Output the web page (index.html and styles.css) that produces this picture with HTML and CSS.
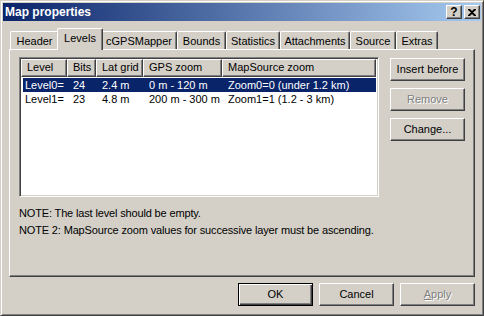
FILE: index.html
```html
<!DOCTYPE html>
<html>
<head>
<meta charset="utf-8">
<link rel="stylesheet" href="styles.css">
</head>
<body>
<div class="window">
  <div class="titlebar">
    <span class="title">Map properties</span>
    <div class="capbtns">
      <span class="capbtn">?</span>
      <span class="capbtn close">
        <svg width="8" height="7" viewBox="0 0 8 7"><path d="M0 0h2l2 2 2-2h2v1L5 3.5 8 6v1H6L4 5 2 7H0V6l3-2.5L0 1z" fill="#000"/></svg>
      </span>
    </div>
  </div>
  <div class="client">
    <div class="tabctl">
      <div class="tabs">
        <div class="tab w1">Header</div>
        <div class="tab w2 sel">Levels</div>
        <div class="tab w3">cGPSMapper</div>
        <div class="tab w4">Bounds</div>
        <div class="tab w5">Statistics</div>
        <div class="tab w6">Attachments</div>
        <div class="tab w7">Source</div>
        <div class="tab w8">Extras</div>
      </div>
      <div class="panel">
        <div class="leftcol">
          <div class="list">
            <div class="hdr">
              <div class="hc c1">Level</div>
              <div class="hc c2">Bits</div>
              <div class="hc c3">Lat grid</div>
              <div class="hc c4">GPS zoom</div>
              <div class="hc c5">MapSource zoom</div>
            </div>
            <div class="row selrow">
              <div class="rc c1 first">Level0=</div>
              <div class="rc c2">24</div>
              <div class="rc c3">2.4 m</div>
              <div class="rc c4">0 m - 120 m</div>
              <div class="rc c5">Zoom0=0 (under 1.2 km)</div>
            </div>
            <div class="row">
              <div class="rc c1 first">Level1=</div>
              <div class="rc c2">23</div>
              <div class="rc c3">4.8 m</div>
              <div class="rc c4">200 m - 300 m</div>
              <div class="rc c5">Zoom1=1 (1.2 - 3 km)</div>
            </div>
          </div>
          <div class="notes">
            <div>NOTE: The last level should be empty.</div>
            <div>NOTE 2: MapSource zoom values for successive layer must be ascending.</div>
          </div>
        </div>
        <div class="rightcol">
          <div class="btn">Insert before</div>
          <div class="btn disabled">Remove</div>
          <div class="btn">Change...</div>
        </div>
      </div>
    </div>
    <div class="bottom">
      <div class="btn default">OK</div>
      <div class="btn">Cancel</div>
      <div class="btn disabled"><u>A</u>pply</div>
    </div>
  </div>
</div>
</body>
</html>
```
FILE: styles.css
```css
html, body {
  margin: 0;
  padding: 0;
  background: #d4d0c8;
}
body {
  font-family: "Liberation Sans", Arial, sans-serif;
  font-size: 11px;
  color: #000;
}
.window {
  width: 484px;
  height: 316px;
  box-sizing: border-box;
  border: 1px solid;
  border-color: #d4d0c8 #404040 #404040 #d4d0c8;
  box-shadow: inset 1px 1px #fff, inset -1px -1px #808080;
  padding: 2px;
  background: #d4d0c8;
  display: flex;
  flex-direction: column;
}
.titlebar {
  height: 18px;
  flex: none;
  background: linear-gradient(to right, #0a246a, #a6caf0);
  display: flex;
  align-items: center;
  justify-content: space-between;
  padding: 0 1px 0 2px;
}
.title {
  color: #fff;
  font-weight: bold;
  font-size: 12px;
}
.capbtns {
  display: flex;
  gap: 2px;
}
.capbtn {
  width: 16px;
  height: 14px;
  box-sizing: border-box;
  background: #d4d0c8;
  border: 1px solid;
  border-color: #fff #404040 #404040 #fff;
  box-shadow: inset -1px -1px #808080;
  display: flex;
  align-items: center;
  justify-content: center;
  font-weight: bold;
  font-size: 12px;
  line-height: 12px;
  padding-bottom: 1px;
}
.close svg { display: block; margin-top: 1px; }
.client {
  flex: 1;
  display: flex;
  flex-direction: column;
  padding: 7px 6px 0 6px;
}
.tabctl {
  display: flex;
  flex-direction: column;
}
.tabs {
  display: flex;
  align-items: flex-end;
  height: 21px;
  padding-left: 1px;
}
.tab {
  height: 18px;
  box-sizing: border-box;
  border-top: 1px solid #fff;
  border-left: 1px solid #fff;
  border-right: 1px solid #404040;
  box-shadow: inset -1px 0 #808080;
  border-radius: 2px 2px 0 0;
  text-align: center;
  line-height: 17px;
  padding-top: 1px;
  position: relative;
  flex: none;
}
.tab.sel {
  height: 22px;
  margin: 0 -2px -1px -2px;
  background: #d4d0c8;
  z-index: 2;
}
.w1 { width: 49px; }
.w2 { width: 42px; }
.w2.sel { width: 46px; }
.w3 { width: 76px; }
.w4 { width: 49px; }
.w5 { width: 54px; }
.w6 { width: 70px; }
.w7 { width: 46px; }
.w8 { width: 42px; }
.panel {
  width: 466px;
  height: 228px;
  box-sizing: border-box;
  border: 1px solid;
  border-color: #fff #404040 #404040 #fff;
  box-shadow: inset -1px -1px #808080;
  display: flex;
  padding: 7px 0 0 9px;
  gap: 11px;
}
.leftcol {
  width: 360px;
  flex: none;
  display: flex;
  flex-direction: column;
}
.list {
  width: 360px;
  height: 140px;
  box-sizing: border-box;
  background: #fff;
  border: 1px solid;
  border-color: #808080 #fff #fff #808080;
  box-shadow: inset 1px 1px #404040, inset -1px -1px #d4d0c8;
  padding: 1px;
}
.hdr {
  display: flex;
  height: 18px;
}
.hc {
  box-sizing: border-box;
  height: 18px;
  background: #d4d0c8;
  border: 1px solid;
  border-color: #fff #404040 #404040 #fff;
  box-shadow: inset -1px -1px #808080;
  padding-left: 5px;
  line-height: 15px;
  white-space: nowrap;
  overflow: hidden;
}
.c1 { width: 46px; }
.c2 { width: 29px; }
.c3 { width: 47px; }
.c4 { width: 79px; }
.c5 { width: 154px; }
.row {
  display: flex;
  height: 14px;
  line-height: 14px;
}
.hdr + .row { margin-top: 1px; }
.rc {
  box-sizing: border-box;
  padding-left: 6px;
  white-space: nowrap;
}
.rc.first {
  margin-left: 2px;
  width: 44px;
  padding-left: 2px;
}
.selrow .rc {
  background: #0a246a;
  color: #fff;
}
.notes {
  margin-top: 8px;
  line-height: 17px;
  white-space: nowrap;
  letter-spacing: -0.15px;
}
.rightcol {
  display: flex;
  flex-direction: column;
  gap: 7px;
  padding-top: 1px;
}
.btn {
  width: 75px;
  height: 23px;
  box-sizing: border-box;
  border: 1px solid;
  border-color: #fff #404040 #404040 #fff;
  box-shadow: inset -1px -1px #808080;
  background: #d4d0c8;
  display: flex;
  align-items: center;
  justify-content: center;
  padding-bottom: 1px;
}
.btn.disabled {
  color: #808080;
  text-shadow: 1px 1px #fff;
}
.btn.default {
  border: 1px solid #000;
  box-shadow: inset 1px 1px #fff, inset -1px -1px #404040, inset -2px -2px #808080;
}
.bottom {
  display: flex;
  justify-content: flex-end;
  gap: 6px;
  padding-top: 6px;
}
```
